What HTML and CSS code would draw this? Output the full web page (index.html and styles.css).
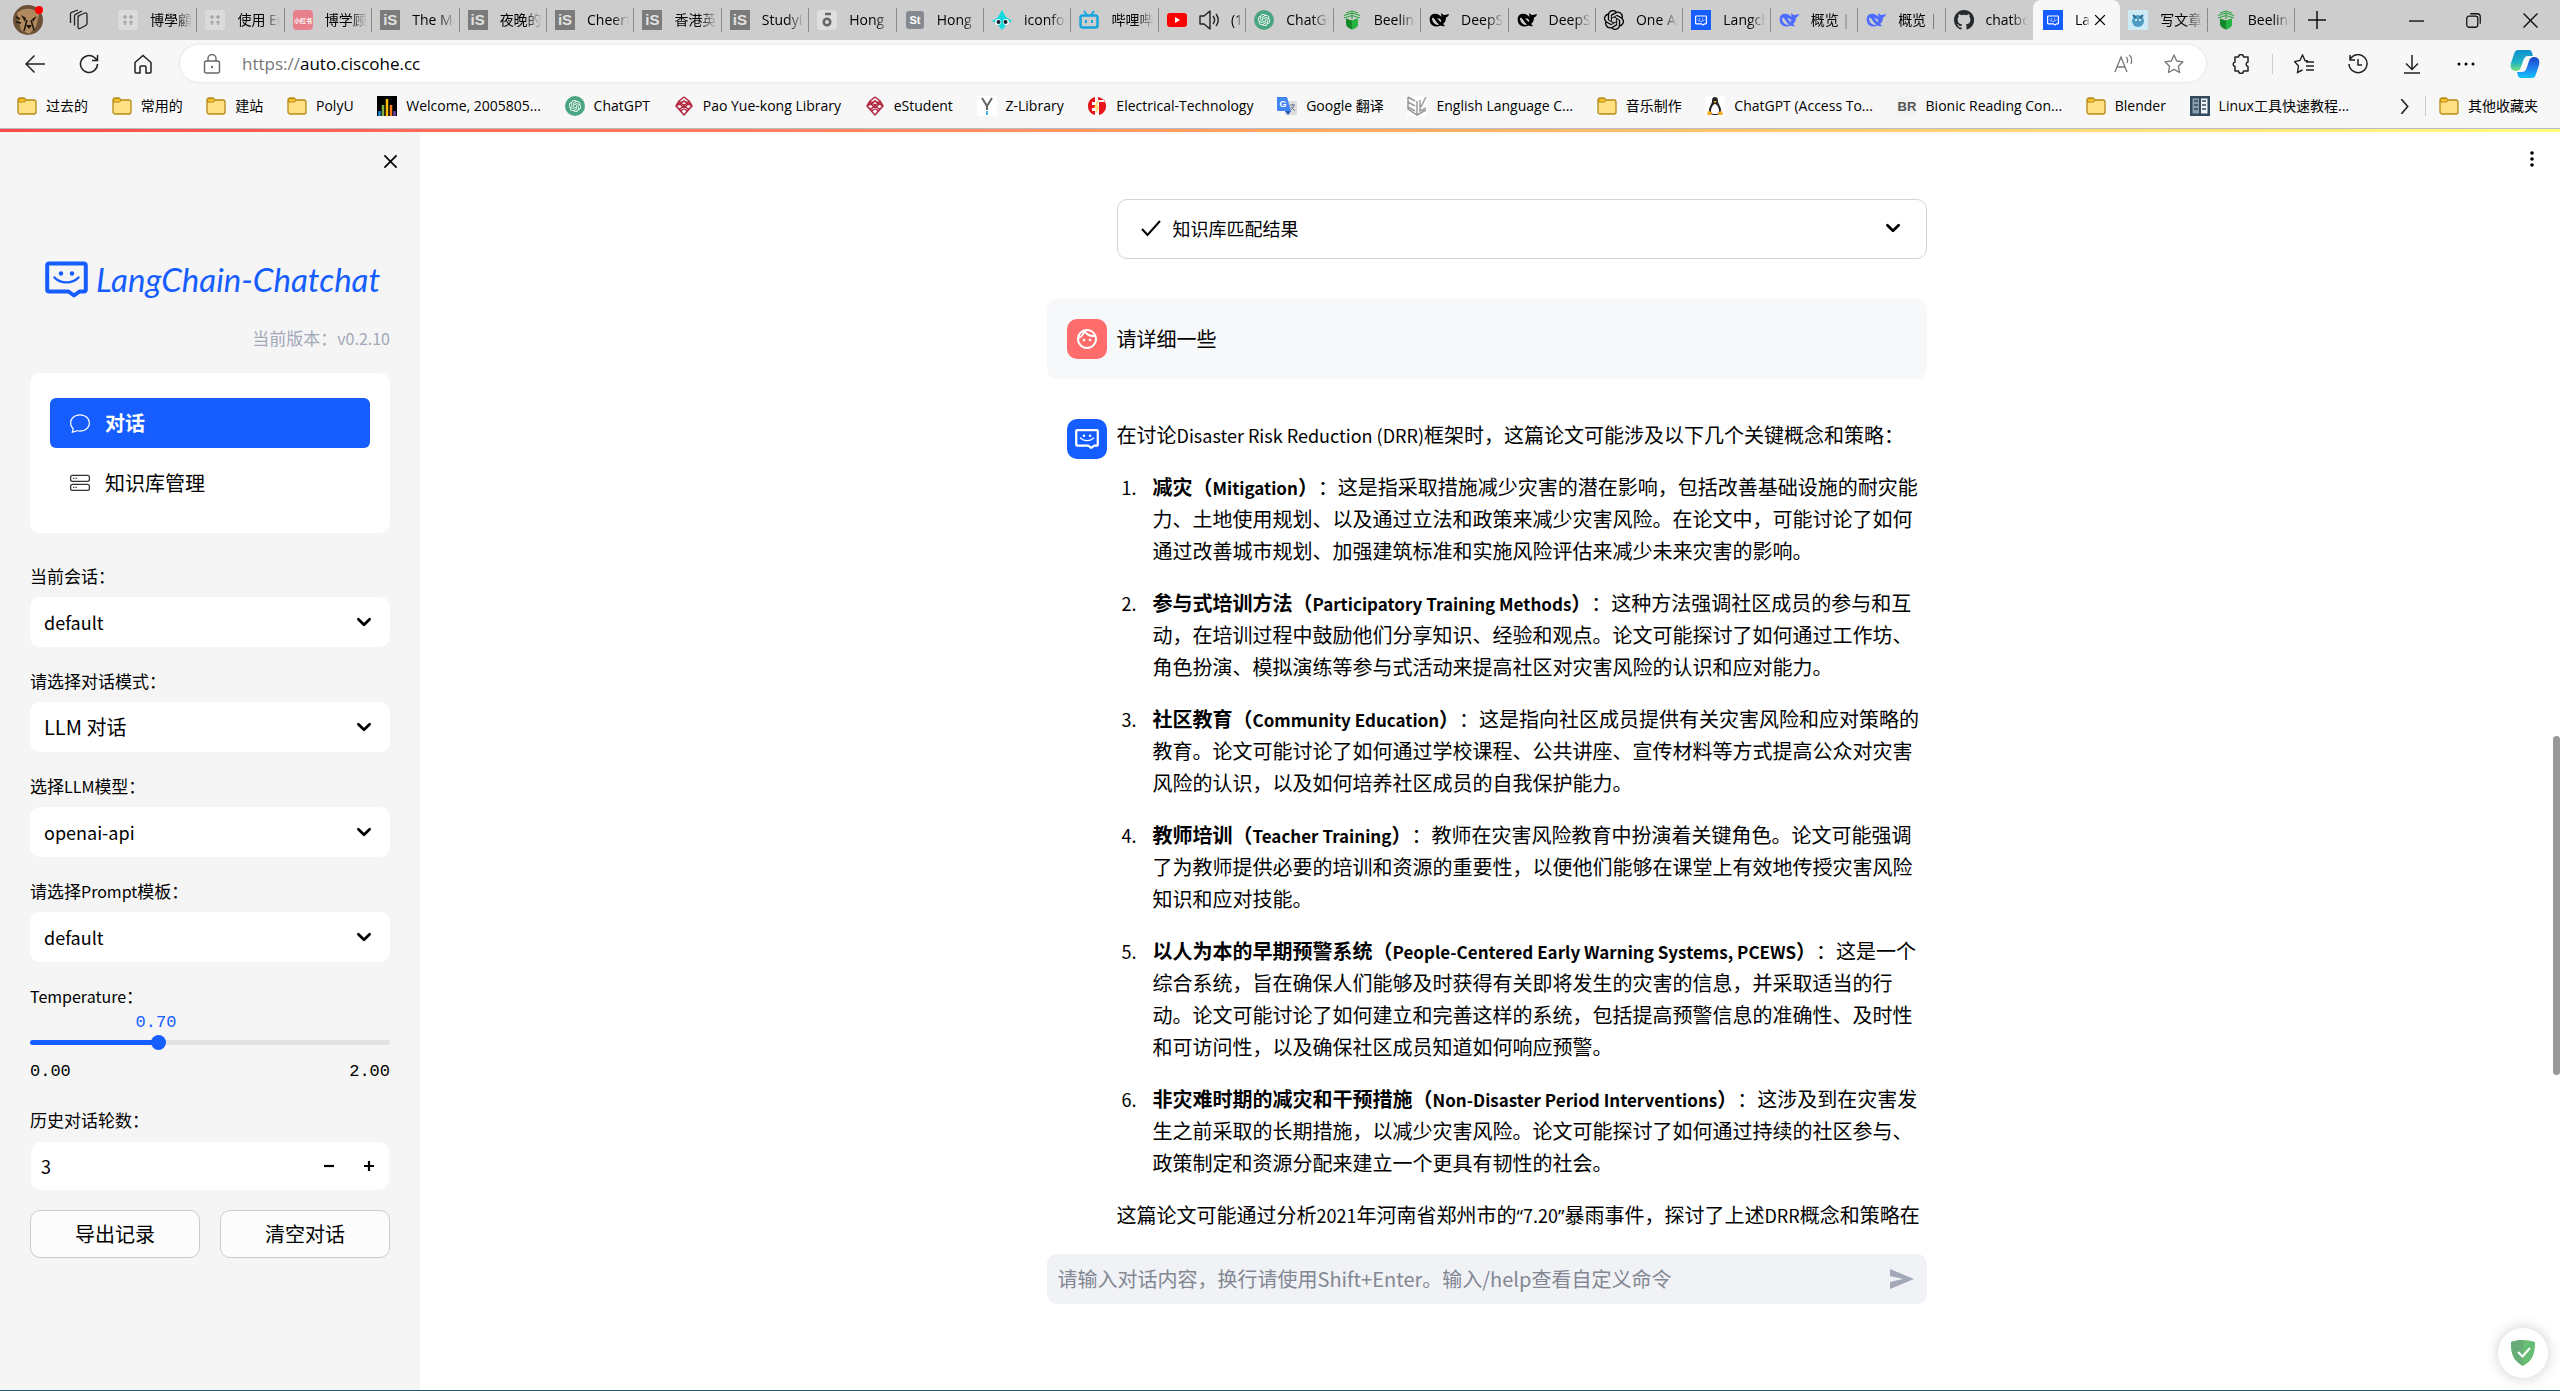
FILE: index.html
```html
<!DOCTYPE html>
<html lang="zh-CN">
<head>
    <meta charset="UTF-8">
    <title>Langchain-Chatchat WebUI</title>
    <link rel="stylesheet" href="styles.css">
</head>
<body>
    <svg class="sprite" aria-hidden="true">
        <symbol id="folder" viewBox="0 0 20 20">
            <path d="M1 4a2 2 0 0 1 2-2h4l2 2h8a2 2 0 0 1 2 2v10a2 2 0 0 1-2 2H3a2 2 0 0 1-2-2z" fill="#ffe082" stroke="#b58a17" stroke-width="1.3"/>
            <path d="M1.6 4a1.5 1.5 0 0 1 1.5-1.400h4A1.500 1.500 0 0 1 8.500 4.500 1.500 1.500 0 0 1 7 6H1.600z" fill="#fbc52c" stroke="#b58a17"/>
        </symbol>
        <symbol id="grid" viewBox="0 0 20 20">
            <rect width="20" height="20" rx="2" fill="#dadada"/>
            <path d="M5 7h4M11 7h4M5 12h4M11 12h4M7 5v4M13 5v4M7 11v4M13 11v4" stroke="#999" stroke-width="1.2"/>
        </symbol>
        <symbol id="knot" viewBox="0 0 16 16">
            <path d="M14.949 6.547a3.940 3.940 0 0 0-.348-3.273 4.110 4.110 0 0 0-4.400-1.934A4.100 4.100 0 0 0 8.423.200 4.150 4.150 0 0 0 6.305.086a4.100 4.100 0 0 0-1.891.948 4.040 4.040 0 0 0-1.158 1.753 4.100 4.100 0 0 0-1.563.679A4 4 0 0 0 .554 4.720a3.990 3.990 0 0 0 .502 4.731 3.940 3.940 0 0 0 .346 3.274 4.110 4.110 0 0 0 4.402 1.933c.382.425.852.764 1.377.995.526.231 1.095.350 1.670.346 1.780.002 3.358-1.132 3.901-2.804a4.100 4.100 0 0 0 1.563-.680 4 4 0 0 0 1.140-1.253 3.990 3.990 0 0 0-.506-4.716m-6.097 8.406a3.050 3.050 0 0 1-1.945-.694l.096-.054 3.230-1.838a.530.530 0 0 0 .265-.455v-4.490l1.366.778q.020.011.025.035v3.722c-.003 1.653-1.361 2.992-3.037 2.996m-6.530-2.750a2.950 2.950 0 0 1-.360-2.010l.095.057L5.290 12.090a.530.530 0 0 0 .527 0l3.949-2.246v1.555a.050.050 0 0 1-.022.041L6.473 13.300c-1.454.826-3.311.335-4.150-1.098m-.850-6.940A3.020 3.020 0 0 1 3.070 3.949v3.785a.510.510 0 0 0 .262.451l3.930 2.237-1.366.779a.050.050 0 0 1-.048 0L2.585 9.342a2.980 2.980 0 0 1-1.113-4.094zm11.216 2.571L8.747 5.576l1.362-.776a.050.050 0 0 1 .048 0l3.265 1.860a3 3 0 0 1 1.173 1.207 2.960 2.960 0 0 1-.270 3.200 3.050 3.050 0 0 1-1.360.997V8.279a.520.520 0 0 0-.276-.445m1.360-2.015-.097-.057-3.226-1.855a.530.530 0 0 0-.530 0L6.249 6.153V4.598a.040.040 0 0 1 .019-.040L9.533 2.700a3.070 3.070 0 0 1 3.257.139c.474.325.843.778 1.066 1.303.223.526.289 1.103.191 1.664zM5.503 8.575 4.139 7.800a.050.050 0 0 1-.026-.037V4.049c0-.570.166-1.127.476-1.607s.752-.864 1.275-1.105a3.080 3.080 0 0 1 3.234.410l-.096.054-3.230 1.838a.530.530 0 0 0-.265.455zm.742-1.577 1.758-1 1.762 1v2l-1.755 1-1.762-1z"/>
        </symbol>
        <symbol id="gpt" viewBox="0 0 20 20">
            <circle cx="10" cy="10" r="10" fill="#4aa583"/>
            <use href="#knot" x="4" y="4" width="12" height="12" fill="#fff"/>
        </symbol>
        <symbol id="beelink" viewBox="0 0 20 20">
            <path d="M4 8.500l6 2 6-2V14c0 2.500-2.500 4.500-6 5.500-3.500-1-6-3-6-5.500z" fill="#16882c"/>
            <path d="M10 10.500l6-2V14c0 2.500-2.500 4.500-6 5.500z" fill="#27b443"/>
            <path d="M2 5.500l8-2.500 8 2.500M4 3l6-2 6 2M2 8l8-2.500L18 8M10 2v7" fill="none" stroke="#2da544" stroke-width="1.100"/>
        </symbol>
        <symbol id="whale" viewBox="0 0 20 20">
            <path d="M1 7c1-3 4-4 7-3 2 .5 3 1.500 5 3-1-2-1-3-.5-4 1 1.500 2 2 3.500 2 1.500 0 2.500-1 4-1-.3 2-1.500 3-3 3.500 0 3-1 5-3 6.500l2 2c-2 .5-3 .3-4.500-.5C7 18 2 16 1 12 .5 10 .5 8.500 1 7zM3 8c0 4 3 7 6 7 1 0 1-.5.500-1-2-1.500-2.500-3-4-5C4.500 8 3.500 7.500 3 8zM8 9c1 0 3 2 3 3 1 0 1.500-1 1-2-.5-1.200-2.500-2-4-1z"/>
        </symbol>
        <symbol id="chat-logo" viewBox="0 0 43 37">
            <path d="M4 2.500h35a1.800 1.800 0 0 1 1.800 1.800v24.400a1.800 1.800 0 0 1-1.800 1.800h-4.500L29 34.500l-5.500-4H4a1.800 1.800 0 0 1-1.800-1.800V4.300A1.800 1.800 0 0 1 4 2.500z" fill="none" stroke="currentColor" stroke-width="4" stroke-linejoin="round"/>
            <circle cx="16" cy="12.500" r="2.200" fill="currentColor"/>
            <circle cx="27" cy="12.500" r="2.200" fill="currentColor"/>
            <path d="M9.500 16.500c6 6.500 18 6.500 24 0" fill="none" stroke="currentColor" stroke-width="2.400" stroke-linecap="round"/>
        </symbol>
        <symbol id="lang" viewBox="0 0 20 20">
            <rect width="20" height="20" fill="#165dff"/>
            <use href="#chat-logo" x="4" y="5" width="12" height="11" color="#fff"/>
        </symbol>
        <symbol id="poly" viewBox="0 0 20 20">
            <path d="M10 1l5 4-10 9M10 1L5 5l10 9M5 5l-3 5 8 9 8-9-3-5M2 10l8-5 8 5M2 10l5 5 8-8M18 10l-5 5-8-8" fill="none" stroke="#b22741" stroke-width="1.500" stroke-linejoin="round"/>
        </symbol>
        <symbol id="chevron" viewBox="0 0 16 16">
            <path d="M3 5.500l5 5 5-5" fill="none" stroke="#000" stroke-width="2.400" stroke-linecap="round" stroke-linejoin="round"/>
        </symbol>
        <symbol id="cross" viewBox="0 0 16 16">
            <path d="M1.500 1.500l13 13M14.500 1.500l-13 13" fill="none" stroke="#000" stroke-width="1.800"/>
        </symbol>
    </svg>

    <header class="browser">
        <div class="tab-strip">
            <div class="strip-start">
                <svg class="profile" viewBox="0 0 30 30">
                    <circle cx="15" cy="15" r="15" fill="#6b5138"/>
                    <path d="M4 8c6-6 18-6 22 2l-3 12-7 7-8-4z" fill="#b08a5e"/>
                    <path d="M8 10l5 3-1 4zM24 11l-5 3 1 3zM13 20h6l-3 4z" fill="#1e150e"/>
                    <path d="M14 15l-3 11M18 15l3 10M3 12l4 2M3 17l5 1" stroke="#1e150e" stroke-width="1.500"/>
                    <circle cx="26" cy="5" r="4" fill="#f00"/>
                </svg>
                <svg class="icon-lg" viewBox="0 0 22 22"><path d="M11 7l7-3a1.500 1.500 0 0 1 2 1.500v9a2 2 0 0 1-1 1.700l-6 3.300a1.500 1.500 0 0 1-2-1.300V9a2 2 0 0 1 1-2zM7.500 16.500V7a2 2 0 0 1 1-1.700L15 2M3.500 14V5a2 2 0 0 1 1-1.700L11 1" fill="none" stroke="#222" stroke-width="1.300" stroke-linejoin="round"/></svg>
            </div>
            <nav class="tabs">
                <a class="tab" href="#"><svg class="fav"><use href="#grid"/></svg><span class="tab-text">博學顧問</span></a>
                <a class="tab" href="#"><svg class="fav"><use href="#grid"/></svg><span class="tab-text">使用 Edge</span></a>
                <a class="tab" href="#"><svg class="fav" viewBox="0 0 20 20"><rect width="20" height="20" rx="4" fill="#e8808c"/><text x="10" y="13" text-anchor="middle" font-size="6" class="glyph" fill="#fff">小红书</text></svg><span class="tab-text">博学顾问</span></a>
                <a class="tab" href="#"><span class="fav is">iS</span><span class="tab-text">The Most</span></a>
                <a class="tab" href="#"><span class="fav is">iS</span><span class="tab-text">夜晚的香</span></a>
                <a class="tab" href="#"><span class="fav is">iS</span><span class="tab-text">Cheerful</span></a>
                <a class="tab" href="#"><span class="fav is">iS</span><span class="tab-text">香港英文</span></a>
                <a class="tab" href="#"><span class="fav is">iS</span><span class="tab-text">Studying</span></a>
                <a class="tab" href="#"><svg class="fav" viewBox="0 0 20 20"><rect width="20" height="20" rx="4" fill="#dedede"/><circle cx="10" cy="12" r="3.200" fill="none" stroke="#666" stroke-width="2.600"/><path d="M8 4h6" stroke="#666" stroke-width="2.500"/></svg><span class="tab-text">Hong</span></a>
                <a class="tab" href="#"><svg class="fav" viewBox="0 0 20 20"><rect x="1" y="1" width="18" height="18" rx="3" fill="#858a91"/><text x="10" y="14" text-anchor="middle" font-size="11" class="glyph" fill="#fff">St</text></svg><span class="tab-text">Hong</span></a>
                <a class="tab" href="#"><svg class="fav" viewBox="0 0 20 20"><path d="M10 0l4 7 6 4-5 3-5 6-5-6-5-3 6-4z" fill="#13d8dd"/><circle cx="6" cy="12" r="3" fill="#fff"/><circle cx="14" cy="12" r="3" fill="#fff"/><circle cx="6.500" cy="12" r="2" fill="#123"/><circle cx="13.500" cy="12" r="2" fill="#123"/></svg><span class="tab-text">iconfont</span></a>
                <a class="tab" href="#"><svg class="fav" viewBox="0 0 20 20"><path d="M5 1l3 4M15 1l-3 4M7 10v3M13 10v3" stroke="#11a5dd" stroke-width="2"/><rect x="1.500" y="5.500" width="17" height="12" rx="2" fill="none" stroke="#11a5dd" stroke-width="2.400"/></svg><span class="tab-text">哔哩哔哩</span></a>
                <a class="tab" href="#"><svg class="fav" viewBox="0 0 20 20"><rect y="3" width="20" height="14" rx="3" fill="#f00"/><path d="M8 7l5 3-5 3z" fill="#fff"/></svg><svg class="fav" viewBox="0 0 20 20"><path d="M1 6h4l6-5v18l-6-5H1zM14 6c2 2.500 2 5.500 0 8M17 4c3 4 3 8 0 12" fill="none" stroke="#222" stroke-width="1.400" stroke-linejoin="round"/></svg><span class="tab-text">(1) You</span></a>
                <a class="tab" href="#"><svg class="fav"><use href="#gpt"/></svg><span class="tab-text">ChatGPT</span></a>
                <a class="tab" href="#"><svg class="fav"><use href="#beelink"/></svg><span class="tab-text">Beelink</span></a>
                <a class="tab" href="#"><svg class="fav"><use href="#whale"/></svg><span class="tab-text">DeepSeek</span></a>
                <a class="tab" href="#"><svg class="fav"><use href="#whale"/></svg><span class="tab-text">DeepSeek</span></a>
                <a class="tab" href="#"><svg class="fav"><use href="#knot"/></svg><span class="tab-text">One API</span></a>
                <a class="tab" href="#"><svg class="fav"><use href="#lang"/></svg><span class="tab-text">Langchain</span></a>
                <a class="tab" href="#"><svg class="fav blue"><use href="#whale"/></svg><span class="tab-text">概览 | D</span></a>
                <a class="tab" href="#"><svg class="fav blue"><use href="#whale"/></svg><span class="tab-text">概览 | D</span></a>
                <a class="tab plain" href="#"><svg class="fav" viewBox="0 0 16 16"><path fill="#24292e" d="M8 0C3.580 0 0 3.580 0 8c0 3.540 2.290 6.530 5.470 7.590.400.070.550-.170.550-.380v-1.340c-2.230.480-2.700-1.070-2.700-1.070-.360-.920-.890-1.170-.890-1.170-.730-.500.050-.490.050-.490.800.060 1.230.830 1.230.830.710 1.220 1.870.870 2.330.660.070-.520.280-.870.510-1.070-1.780-.200-3.640-.890-3.640-3.950 0-.870.310-1.590.820-2.150-.080-.200-.360-1.020.080-2.120 0 0 .670-.210 2.200.820a7.500 7.500 0 0 1 4 0c1.530-1.040 2.200-.820 2.200-.820.440 1.100.160 1.920.080 2.120.510.560.820 1.270.820 2.150 0 3.070-1.870 3.750-3.650 3.950.290.250.540.730.540 1.480v2.200c0 .210.150.460.550.380A8 8 0 0 0 8 0z"/></svg><span class="tab-text">chatbot</span></a>
                <a class="tab active" href="#"><svg class="fav"><use href="#lang"/></svg><span class="tab-text">Langchain</span><svg class="tab-close"><use href="#cross"/></svg></a>
                <a class="tab" href="#"><svg class="fav" viewBox="0 0 20 20"><rect width="20" height="20" fill="#cdeaf5"/><circle cx="10" cy="11" r="6" fill="#4f9dc4"/><path d="M5 5l3 3M15 5l-3 3" stroke="#2b6c93" stroke-width="2"/><circle cx="8" cy="10" r="1" fill="#fff"/><circle cx="12" cy="10" r="1" fill="#fff"/></svg><span class="tab-text">写文章 -</span></a>
                <a class="tab" href="#"><svg class="fav"><use href="#beelink"/></svg><span class="tab-text">Beelink</span></a>
            </nav>
            <div class="strip-end">
                <button class="icon-btn" aria-label="新建标签页"><svg class="icon" viewBox="0 0 20 20"><path d="M10 1v18M1 10h18" stroke="#111" stroke-width="1.500"/></svg></button>
                <div class="window-buttons">
                    <button class="icon-btn" aria-label="最小化"><svg class="icon-sm" viewBox="0 0 14 14"><path d="M0 7.500h14" stroke="#111" stroke-width="1.300"/></svg></button>
                    <button class="icon-btn" aria-label="还原"><svg class="icon-sm" viewBox="0 0 14 14"><path d="M.7 5a2 2 0 0 1 2-2H9a2 2 0 0 1 2 2v6.300a2 2 0 0 1-2 2H2.700a2 2 0 0 1-2-2zM4 .7h6.500a2.800 2.800 0 0 1 2.800 2.800V10" fill="none" stroke="#111" stroke-width="1.200"/></svg></button>
                    <button class="icon-btn" aria-label="关闭"><svg class="icon-sm" viewBox="0 0 14 14"><path d="M.5.5l13 13M13.500.5l-13 13" stroke="#111" stroke-width="1.300"/></svg></button>
                </div>
            </div>
        </div>

        <div class="toolbar">
            <div class="tool-group">
                <button class="icon-btn" aria-label="后退"><svg class="icon" viewBox="0 0 20 20"><path d="M20 10H1M9.500 1.500L1 10l8.500 8.500" fill="none" stroke="#222" stroke-width="1.500"/></svg></button>
                <button class="icon-btn" aria-label="刷新"><svg class="icon" viewBox="0 0 20 20"><path d="M18.500 10a8.500 8.500 0 1 1-3-6.500L18 6M18.500 1v5.500H13" fill="none" stroke="#222" stroke-width="1.500"/></svg></button>
                <button class="icon-btn" aria-label="主页"><svg class="icon" viewBox="0 0 20 20"><path d="M2 8.500l8-7 8 7V18a1 1 0 0 1-1 1h-4v-6a1 1 0 0 0-1-1H8a1 1 0 0 0-1 1v6H3a1 1 0 0 1-1-1z" fill="none" stroke="#222" stroke-width="1.500"/></svg></button>
            </div>
            <div class="address">
                <svg class="icon" viewBox="0 0 20 20"><rect x="2.500" y="7" width="15" height="12" rx="2" fill="none" stroke="#666" stroke-width="1.400"/><path d="M6 7V4.500a4 4 0 0 1 8 0V7" fill="none" stroke="#666" stroke-width="1.400"/><circle cx="10" cy="13" r="1.200" fill="#666"/></svg>
                <label class="scheme" for="url">https://</label>
                <input class="url" id="url" type="text" value="auto.ciscohe.cc">
                <button class="icon-btn" aria-label="大声朗读"><svg class="icon" viewBox="0 0 20 20"><path d="M1 18L7 3l6 15M3 13h8M12 3c2 1 2 4 1 6M15 1c3 2 3 6 2 9" fill="none" stroke="#777" stroke-width="1.300"/></svg></button>
                <button class="icon-btn" aria-label="收藏"><svg class="icon" viewBox="0 0 20 20"><path d="M10 1l2.700 6 6.300.8-4.600 4.400 1.200 6.300-5.600-3.100-5.600 3.100 1.200-6.300L1 7.800 7.300 7z" fill="none" stroke="#777" stroke-width="1.300" stroke-linejoin="round"/></svg></button>
            </div>
            <div class="tool-group tool-end">
                <button class="icon-btn" aria-label="扩展"><svg class="icon" viewBox="0 0 20 20"><path d="M4 3h3.500a2.500 2.500 0 0 1 5 0H17v5a2.300 2.300 0 0 0 0 4.500V17h-4.500a2.500 2.500 0 0 1-5 0H4v-4.500A2.300 2.300 0 0 1 4 8z" fill="none" stroke="#222" stroke-width="1.500" stroke-linejoin="round"/></svg></button>
                <span class="divider"></span>
                <button class="icon-btn" aria-label="收藏夹"><svg class="icon" viewBox="0 0 20 20"><path d="M14 7l-3-.5L8.500 1 6 6.500.5 7.500 4.500 12l-1 6.500L8.500 16M12 8h8M12 12h8M12 16h8" fill="none" stroke="#222" stroke-width="1.400"/></svg></button>
                <button class="icon-btn" aria-label="历史记录"><svg class="icon" viewBox="0 0 20 20"><path d="M2 5.500A9 9 0 1 1 1 10M2 1v5h5M10 5v6h4" fill="none" stroke="#222" stroke-width="1.500"/></svg></button>
                <button class="icon-btn" aria-label="下载"><svg class="icon" viewBox="0 0 20 20"><path d="M10 1v14M4 9.500l6 6 6-6M2 19h16" fill="none" stroke="#222" stroke-width="1.500"/></svg></button>
                <button class="icon-btn" aria-label="更多"><svg class="icon" viewBox="0 0 20 20"><circle cx="3" cy="10" r="1.500"/><circle cx="10" cy="10" r="1.500"/><circle cx="17" cy="10" r="1.500"/></svg></button>
                <button class="icon-btn" aria-label="Copilot"><svg class="copilot" viewBox="0 0 30 30">
                    <defs>
                        <linearGradient id="cop1" x2="0" y2="1"><stop stop-color="#0d8fd0"/><stop offset=".6" stop-color="#21b5c4"/><stop offset="1" stop-color="#7be07a"/></linearGradient>
                        <linearGradient id="cop2" x2="0" y2="1"><stop stop-color="#1b45c9"/><stop offset=".5" stop-color="#1e7bea"/><stop offset="1" stop-color="#14c4fb"/></linearGradient>
                    </defs>
                    <path d="M8 1h11c3 0 3 3 4 6h-5c-3 0-4 2-5 5l-2 6c-1 3-3 4-5 4-5 0-6-4-5-8L4 5c1-3 2-4 4-4z" fill="url(#cop1)"/>
                    <path d="M22 29H11c-3 0-3-3-4-6h5c3 0 4-2 5-5l2-6c1-3 3-4 5-4 5 0 6 4 5 8l-3 9c-1 3-2 4-4 4z" fill="url(#cop2)"/>
                </svg></button>
            </div>
        </div>

        <div class="bookmarks">
            <nav class="bookmark-list">
                <a class="bookmark" href="#"><svg class="fav"><use href="#folder"/></svg>过去的</a>
                <a class="bookmark" href="#"><svg class="fav"><use href="#folder"/></svg>常用的</a>
                <a class="bookmark" href="#"><svg class="fav"><use href="#folder"/></svg>建站</a>
                <a class="bookmark" href="#"><svg class="fav"><use href="#folder"/></svg>PolyU</a>
                <a class="bookmark" href="#"><svg class="fav" viewBox="0 0 20 20"><rect width="20" height="20"/><path d="M2.500 20v-5" stroke="#1e88e5" stroke-width="2.500"/><path d="M6 20V9" stroke="#7cb342" stroke-width="2.500"/><path d="M10 20V3" stroke="#ffc107" stroke-width="2.500"/><path d="M14 20V9" stroke="#ff7a1a" stroke-width="2.500"/><path d="M17.500 20v-5" stroke="#6a3fb0" stroke-width="2.500"/></svg>Welcome, 2005805...</a>
                <a class="bookmark" href="#"><svg class="fav"><use href="#gpt"/></svg>ChatGPT</a>
                <a class="bookmark" href="#"><svg class="fav"><use href="#poly"/></svg>Pao Yue-kong Library</a>
                <a class="bookmark" href="#"><svg class="fav"><use href="#poly"/></svg>eStudent</a>
                <a class="bookmark" href="#"><svg class="fav" viewBox="0 0 20 20"><rect width="20" height="20" fill="#fff"/><path d="M5 2l5 8 5-8M10 10v4" fill="none" stroke="#666" stroke-width="2"/><path d="M10 15v4" stroke="#4ab0e0" stroke-width="2"/></svg>Z-Library</a>
                <a class="bookmark" href="#"><svg class="fav" viewBox="0 0 20 20"><path d="M8 1C4 2 1 5 1 10s3 8 7 9v-4H5v-3h3V9H5V6h3zM11 1c5 1 8 4 8 9s-3 8-7 9V6h6V4h-7z" fill="#e8141c"/><path d="M11 5L8 11h3l-2 5" fill="none" stroke="#ffd54f" stroke-width="1.500"/></svg>Electrical-Technology</a>
                <a class="bookmark" href="#"><svg class="fav" viewBox="0 0 20 20"><rect x="8" y="5" width="12" height="14" rx="1" fill="#dcdcdc"/><path d="M0 1h10l4 14H1a1 1 0 0 1-1-1z" fill="#4285f4"/><path d="M8 15h6l-3 4z" fill="#2b56b8"/><text x="6" y="11" text-anchor="middle" font-size="9" class="glyph" fill="#fff">G</text><path d="M13 9h5M15.500 8v1M17 9c-1 3-2 4-3 5M14 11l4 4" stroke="#68798f" fill="none"/></svg>Google 翻译</a>
                <a class="bookmark" href="#"><svg class="fav" viewBox="0 0 20 20"><rect width="20" height="20" fill="#fff"/><path d="M1 1l7 4M1 6l7 4M1 11l7 4M1 1v12l9 6V5M13 4v11l6-3M10 19l9-5M14 11l5-10" fill="none" stroke="#999" stroke-width="1.500"/></svg>English Language C...</a>
                <a class="bookmark" href="#"><svg class="fav"><use href="#folder"/></svg>音乐制作</a>
                <a class="bookmark" href="#"><svg class="fav" viewBox="0 0 20 20"><rect width="20" height="20" fill="#fff"/><path d="M10 1c3 0 3 3 3 5 1 3 3 5 3 8s-2 5-6 5-6-2-6-5 2-5 3-8c0-2 0-5 3-5z" fill="#222"/><path d="M10 8c2 0 4 4 4 7s-2 3-4 3-4 0-4-3 2-7 4-7z" fill="#fff"/><path d="M3 15l4 1-1 3H2zM17 15l-4 1 1 3h4zM8.500 5h3L10 7.500z" fill="#f5b01c"/></svg>ChatGPT (Access To...</a>
                <a class="bookmark" href="#"><svg class="fav" viewBox="0 0 20 20"><rect width="20" height="20" fill="#f2f2f2"/><text x="10" y="15" text-anchor="middle" font-size="13" class="glyph" fill="#555">BR</text></svg>Bionic Reading Con...</a>
                <a class="bookmark" href="#"><svg class="fav"><use href="#folder"/></svg>Blender</a>
                <a class="bookmark" href="#"><svg class="fav" viewBox="0 0 20 20"><rect width="20" height="20" fill="#34495e"/><path d="M2.500 2.500h6.500v15H2.500z" fill="#8ba0ad"/><path d="M11 2.500h6.500v15H11z" fill="#eef2f4"/><path d="M4 5h4M4 9h4M4 13h4M12 5h4M12 9h4M12 13h4" stroke="#34495e" stroke-width="1.500"/></svg>Linux工具快速教程...</a>
            </nav>
            <div class="bookmark-end">
                <button class="icon-btn" aria-label="更多书签"><svg class="icon-sm" viewBox="0 0 14 14"><path d="M4 0l6 7-6 7" fill="none" stroke="#222" stroke-width="1.500"/></svg></button>
                <span class="divider"></span>
                <a class="bookmark" href="#"><svg class="fav"><use href="#folder"/></svg>其他收藏夹</a>
            </div>
        </div>
    </header>

    <div class="decoration"></div>

    <div class="app">
        <aside class="sidebar">
            <div class="sidebar-head">
                <button class="icon-btn" aria-label="收起侧栏"><svg class="icon-sm" viewBox="0 0 16 16"><use href="#cross"/></svg></button>
            </div>
            <div class="brand">
                <svg class="brand-icon"><use href="#chat-logo"/></svg>
                <span class="brand-name">LangChain-Chatchat</span>
            </div>
            <p class="version">当前版本：<span class="en">v0.2.10</span></p>

            <nav class="menu">
                <a class="menu-item selected" href="#">
                    <svg class="icon" viewBox="0 0 16 16"><path fill="currentColor" d="M2.678 11.894a1 1 0 0 1 .287.801 10.970 10.970 0 0 1-.398 2c1.395-.323 2.247-.697 2.634-.893a1 1 0 0 1 .710-.074A8.060 8.060 0 0 0 8 14c3.996 0 7-2.807 7-6s-3.004-6-7-6-7 2.808-7 6c0 1.468.617 2.830 1.678 3.894m-.493 3.905a22 22 0 0 1-.713.129c-.200.032-.352-.176-.273-.362a10 10 0 0 0 .244-.637l.003-.010c.248-.720.450-1.548.524-2.319C.743 11.370 0 9.760 0 8c0-3.866 3.582-7 8-7s8 3.134 8 7-3.582 7-8 7a9 9 0 0 1-2.347-.306c-.520.263-1.639.742-3.468 1.105"/></svg>
                    对话
                </a>
                <a class="menu-item" href="#">
                    <svg class="icon" viewBox="0 0 16 16"><g fill="none" stroke="#333" stroke-width="1"><rect x=".5" y="1.800" width="15" height="4.800" rx="1.500"/><rect x=".5" y="9" width="15" height="4.800" rx="1.500"/></g><path d="M2.500 4.200h1M4.500 4.200h1M2.500 11.400h1M4.500 11.400h1" stroke="#333"/></svg>
                    知识库管理
                </a>
            </nav>

            <form class="settings">
                <div class="field">
                    <label for="session">当前会话：</label>
                    <div class="select-wrap">
                        <select id="session" class="latin"><option>default</option></select>
                        <svg class="caret"><use href="#chevron"/></svg>
                    </div>
                </div>
                <div class="field">
                    <label for="mode">请选择对话模式：</label>
                    <div class="select-wrap">
                        <select id="mode"><option>LLM 对话</option></select>
                        <svg class="caret"><use href="#chevron"/></svg>
                    </div>
                </div>
                <div class="field">
                    <label for="model">选择<span class="en">LLM</span>模型：</label>
                    <div class="select-wrap">
                        <select id="model" class="latin"><option>openai-api</option></select>
                        <svg class="caret"><use href="#chevron"/></svg>
                    </div>
                </div>
                <div class="field">
                    <label for="prompt">请选择<span class="en">Prompt</span>模板：</label>
                    <div class="select-wrap">
                        <select id="prompt" class="latin"><option>default</option></select>
                        <svg class="caret"><use href="#chevron"/></svg>
                    </div>
                </div>
                <div class="field slider">
                    <label for="temperature"><span class="en">Temperature</span>：</label>
                    <div class="slider-value"><output for="temperature" style="margin-left: 35%">0.70</output></div>
                    <input id="temperature" type="range" min="0" max="2" step="0.01" value="0.7">
                    <div class="slider-ends"><span>0.00</span><span>2.00</span></div>
                </div>
                <div class="field">
                    <label for="rounds">历史对话轮数：</label>
                    <div class="stepper">
                        <input id="rounds" type="number" value="3">
                        <button type="button" aria-label="减少"><svg viewBox="0 0 10 10"><path d="M0 5h10" stroke="#000" stroke-width="2.200"/></svg></button>
                        <button type="button" aria-label="增加"><svg viewBox="0 0 10 10"><path d="M0 5h10M5 0v10" stroke="#000" stroke-width="2.200"/></svg></button>
                    </div>
                </div>
                <div class="actions">
                    <button type="button" class="action">导出记录</button>
                    <button type="button" class="action">清空对话</button>
                </div>
            </form>
        </aside>

        <main class="main">
            <div class="chat">
                <details class="expander">
                    <summary>
                        <svg class="icon" viewBox="0 0 20 20"><path d="M1 11l5.500 6L19 3" fill="none" stroke="#000" stroke-width="2"/></svg>
                        <span>知识库匹配结果</span>
                        <svg class="caret"><use href="#chevron"/></svg>
                    </summary>
                </details>

                <section class="message user">
                    <span class="avatar red">
                        <svg class="face" viewBox="0 0 24 24"><path fill="#fff" d="M10.250 13a1.250 1.250 0 1 1-2.500 0 1.250 1.250 0 0 1 2.500 0zM15 11.750a1.250 1.250 0 1 0 0 2.500 1.250 1.250 0 0 0 0-2.500zM22 12c0 5.520-4.480 10-10 10S2 17.520 2 12 6.480 2 12 2s10 4.480 10 10zM10.660 4.120A10 10 0 0 0 17.500 8c.460 0 .910-.050 1.340-.120A8 8 0 0 0 12 4c-.460 0-.910.050-1.340.120zM4.420 9.470a8 8 0 0 0 3.660-4.440 8.040 8.040 0 0 0-3.660 4.440zM20 12c0-.780-.120-1.530-.330-2.240-.700.150-1.420.240-2.170.240a10 10 0 0 1-7.760-3.690A12 12 0 0 1 4 11.860V12a8 8 0 1 0 16 0z"/></svg>
                    </span>
                    <div class="content"><p>请详细一些</p></div>
                </section>

                <section class="message">
                    <span class="avatar blue">
                        <svg class="face"><use href="#chat-logo"/></svg>
                    </span>
                    <div class="content">
                        <p>在讨论<span class="en">Disaster Risk Reduction (DRR)</span>框架时，这篇论文可能涉及以下几个关键概念和策略：</p>
                        <ol>
                            <li><strong>减灾（<span class="en">Mitigation</span>）</strong>：这是指采取措施减少灾害的潜在影响，包括改善基础设施的耐灾能力、土地使用规划、以及通过立法和政策来减少灾害风险。在论文中，可能讨论了如何通过改善城市规划、加强建筑标准和实施风险评估来减少未来灾害的影响。</li>
                            <li><strong>参与式培训方法（<span class="en">Participatory Training Methods</span>）</strong>：这种方法强调社区成员的参与和互动，在培训过程中鼓励他们分享知识、经验和观点。论文可能探讨了如何通过工作坊、角色扮演、模拟演练等参与式活动来提高社区对灾害风险的认识和应对能力。</li>
                            <li><strong>社区教育（<span class="en">Community Education</span>）</strong>：这是指向社区成员提供有关灾害风险和应对策略的教育。论文可能讨论了如何通过学校课程、公共讲座、宣传材料等方式提高公众对灾害风险的认识，以及如何培养社区成员的自我保护能力。</li>
                            <li><strong>教师培训（<span class="en">Teacher Training</span>）</strong>：教师在灾害风险教育中扮演着关键角色。论文可能强调了为教师提供必要的培训和资源的重要性，以便他们能够在课堂上有效地传授灾害风险知识和应对技能。</li>
                            <li><strong>以人为本的早期预警系统（<span class="en">People-Centered Early Warning Systems, PCEWS</span>）</strong>：这是一个综合系统，旨在确保人们能够及时获得有关即将发生的灾害的信息，并采取适当的行动。论文可能讨论了如何建立和完善这样的系统，包括提高预警信息的准确性、及时性和可访问性，以及确保社区成员知道如何响应预警。</li>
                            <li><strong>非灾难时期的减灾和干预措施（<span class="en">Non-Disaster Period Interventions</span>）</strong>：这涉及到在灾害发生之前采取的长期措施，以减少灾害风险。论文可能探讨了如何通过持续的社区参与、政策制定和资源分配来建立一个更具有韧性的社会。</li>
                        </ol>
                        <p>这篇论文可能通过分析<span class="en">2021</span>年河南省郑州市的<span class="en"><q>7.20</q></span>暴雨事件，探讨了上述<span class="en">DRR</span>概念和策略在</p>
                    </div>
                </section>

                <form class="composer">
                    <input type="text" aria-label="对话内容" placeholder="请输入对话内容，换行请使用Shift+Enter。输入/help查看自定义命令">
                    <button type="button" class="icon-btn" aria-label="发送"><svg class="send" viewBox="0 0 24 20"><path d="M0 0l24 10L0 20v-7l13-3L0 7z" fill="#a3a8b8"/></svg></button>
                </form>
            </div>
            <button class="icon-btn more" aria-label="菜单"><svg class="icon" viewBox="0 0 20 20"><circle cx="10" cy="4" r="1.800"/><circle cx="10" cy="10" r="1.800"/><circle cx="10" cy="16" r="1.800"/></svg></button>
            <span class="scroll-thumb"></span>
            <span class="guard">
                <svg viewBox="0 0 26 28"><path d="M13 1c4 0 8 .7 12 2 0 12-2 18-12 24C3 21 1 15 1 3c4-1.300 8-2 12-2z" fill="#67bd73"/><path d="M13 1v26C3 21 1 15 1 3c4-1.300 8-2 12-2z" fill="#68ad77"/><path d="M8 13l4.500 4.500L20 9" fill="none" stroke="#fff" stroke-width="2"/></svg>
            </span>
        </main>
    </div>
</body>
</html>
```

FILE: styles.css
```css
* {
    box-sizing: border-box;
}

body {
    display: flex;
    flex-direction: column;
    min-height: 100vh;
    margin: 0;
    color: #000000;
    font-family: "Noto Sans CJK SC", sans-serif;
    font-size: 20px;
    line-height: 32px;
    text-spacing-trim: space-all;
    border-bottom: 1px solid #1f5a6b;
}

p {
    margin: 0;
}

a {
    color: inherit;
    text-decoration: none;
}

button, input, select {
    padding: 0;
    border: none;
    outline: none;
    background: none;
    color: inherit;
    font: inherit;
}

q {
    quotes: "“" "”";
}

q::before, q::after {
    font-family: "Noto Sans", sans-serif;
}

.sprite {
    display: none;
}

.glyph {
    font-family: "Liberation Sans", "Noto Sans CJK SC", sans-serif;
    font-weight: bold;
}

.icon-btn {
    display: flex;
    align-items: center;
    justify-content: center;
}

.icon {
    width: 20px;
    height: 20px;
}

.icon-lg {
    width: 22px;
    height: 22px;
}

.icon-sm {
    width: 15px;
    height: 15px;
}

.fav {
    flex: none;
    width: 20px;
    height: 20px;
}

.fav.blue {
    fill: #4d6bfe;
}

.fav.is {
    background-color: #7b7b7b;
    color: #e2e2e2;
    font-family: "Liberation Sans", sans-serif;
    font-size: 15px;
    font-weight: bold;
    text-align: center;
}

.divider {
    width: 1px;
    height: 20px;
    background-color: #cccccc;
}

/* browser chrome */
.browser {
    background-color: #f7f7f7;
    border-bottom: 1px solid #b9bcc0;
    font-family: "Open Sans", "Noto Sans CJK SC", sans-serif;
    font-size: 14px;
    line-height: 20px;
}

.tab-strip {
    display: flex;
    height: 40px;
    background-color: #cdcdcd;
}

.strip-start {
    display: flex;
    align-items: center;
    gap: 24px;
    width: 110px;
    padding-left: 13px;
}

.profile {
    width: 30px;
    height: 30px;
    overflow: visible;
}

.tabs {
    display: flex;
    flex: 1;
    min-width: 0;
}

.tab {
    display: flex;
    flex: 1 1 80px;
    align-items: center;
    gap: 12px;
    min-width: 0;
    margin: 8px 0;
    padding: 0 4px 0 8px;
    border-right: 1px solid #8a8a8a;
}

.tab.plain {
    border-right-color: transparent;
}

.tab.active {
    margin: 0;
    border: none;
    padding: 0 14px 0 10px;
    border-radius: 8px 8px 0 0;
    background-color: #f7f7f7;
}

.tab-text {
    flex: 1;
    min-width: 0;
    overflow: hidden;
    white-space: nowrap;
    mask-image: linear-gradient(90deg, #000 60%, transparent);
}

.tab-close {
    flex: none;
    width: 12px;
    height: 12px;
    margin-left: -8px;
}

.strip-end {
    display: flex;
    align-items: center;
    justify-content: space-between;
    width: 265px;
    padding: 0 22px 0 12px;
}

.window-buttons {
    display: flex;
    gap: 42px;
}

.toolbar {
    display: flex;
    align-items: center;
    height: 47px;
}

.tool-group {
    display: flex;
    align-items: center;
    gap: 34px;
    width: 180px;
    padding: 0 25px;
}

.tool-end {
    width: 354px;
    padding-right: 0;
}

.tool-end .divider {
    margin: 0 -13px;
}

.copilot {
    width: 30px;
    height: 30px;
}

.address {
    display: flex;
    flex: 1;
    align-items: center;
    height: 37px;
    padding: 0 22px;
    border-radius: 19px;
    background-color: #ffffff;
    box-shadow: 0 0 3px rgba(0, 0, 0, 0.12);
    font-size: 17px;
}

.address .icon-btn {
    margin-left: 30px;
}

.scheme {
    margin-left: 20px;
    color: #767676;
}

.url {
    flex: 1;
}

.bookmarks {
    display: flex;
    align-items: center;
    justify-content: space-between;
    height: 41px;
    padding: 0 22px 3px 17px;
}

.bookmark-list {
    display: flex;
    flex: 1;
    justify-content: space-between;
}

.bookmark {
    display: flex;
    align-items: center;
    gap: 9px;
    white-space: nowrap;
}

.bookmark-end {
    display: flex;
    align-items: center;
    gap: 13px;
    margin-left: 48px;
}

.decoration {
    height: 3px;
    background-image: linear-gradient(90deg, #ff4b4b, #fffd80);
}

/* app */
.app {
    display: flex;
    flex: 1;
}

.sidebar {
    width: 420px;
    padding: 20px 30px;
    background-color: #f5f5f5;
}

.sidebar-head {
    display: flex;
    align-items: flex-start;
    justify-content: flex-end;
    height: 108px;
    margin-right: -8px;
    padding-top: 2px;
}

.brand {
    display: flex;
    align-items: center;
    gap: 8px;
    height: 38px;
    padding-left: 15px;
    color: #165dff;
}

.brand-icon {
    flex: none;
    width: 43px;
    height: 37px;
}

.brand-name {
    font-family: Lato, sans-serif;
    font-size: 33px;
    font-style: italic;
    white-space: nowrap;
}

.version {
    margin-top: 24px;
    color: #a3a8b8;
    font-size: 17px;
    text-align: right;
}

.menu {
    display: flex;
    flex-direction: column;
    gap: 10px;
    margin-top: 19px;
    padding: 25px 20px;
    border-radius: 10px;
    background-color: #ffffff;
}

.menu-item {
    display: flex;
    align-items: center;
    gap: 15px;
    height: 50px;
    padding: 0 20px;
    border-radius: 6px;
}

.menu-item.selected {
    background-color: #165dff;
    color: #ffffff;
    font-weight: bold;
}

.settings {
    display: flex;
    flex-direction: column;
    gap: 20px;
    margin-top: 29px;
}

.field label {
    display: block;
    height: 30px;
    font-size: 17px;
    line-height: 28px;
}

/* latin glyphs run wide next to the chinese ones */
.en {
    font-size: 18px;
    line-height: 1;
}

.field .en, .version .en {
    font-size: 16px;
}

.content strong .en {
    font-size: 17px;
}

.select-wrap {
    display: grid;
    align-items: center;
    margin-top: 5px;
}

.select-wrap select, .select-wrap .caret {
    grid-area: 1 / 1;
}

.select-wrap select {
    appearance: none;
    height: 50px;
    padding: 0 14px;
    border-radius: 10px;
    background-color: #ffffff;
}

.select-wrap .latin {
    font-size: 18px;
}

.caret {
    width: 18px;
    height: 18px;
}

.select-wrap .caret {
    justify-self: end;
    margin-right: 17px;
    pointer-events: none;
}

.slider {
    font-family: "Liberation Mono", monospace;
    font-size: 17px;
    line-height: 22px;
}

.slider label {
    font-family: "Noto Sans CJK SC", sans-serif;
}

.slider-value {
    height: 22px;
    color: #165dff;
}

.slider-value output {
    display: inline-block;
    transform: translateX(-50%);
}

.slider input {
    appearance: none;
    display: block;
    width: 100%;
    height: 5px;
    margin: 6px 0 16px;
    border-radius: 3px;
    background-image: linear-gradient(90deg, #165dff 35%, #e2e2e2 35%);
}

.slider input::-webkit-slider-thumb {
    appearance: none;
    width: 15px;
    height: 15px;
    border-radius: 50%;
    background-color: #165dff;
}

.slider-ends {
    display: flex;
    justify-content: space-between;
    padding-bottom: 3px;
}

.stepper {
    display: flex;
    height: 48px;
    margin: 6px 1px 0;
    border-radius: 10px;
    background-color: #ffffff;
}

.stepper input {
    flex: 1;
    min-width: 0;
    padding-left: 10px;
    appearance: textfield;
    font-size: 18px;
}

.stepper input::-webkit-inner-spin-button {
    appearance: none;
}

.stepper button {
    display: flex;
    align-items: center;
    justify-content: center;
    width: 40px;
}

.stepper svg {
    width: 10px;
    height: 10px;
}

.actions {
    display: flex;
    gap: 20px;
}

.action {
    flex: 1;
    height: 48px;
    border: 1px solid #cccccc;
    border-radius: 10px;
    background-color: #fcfcfc;
}

.main {
    position: relative;
    flex: 1;
    padding: 67px 7px 86px 0;
}

.chat {
    max-width: 880px;
    margin: 0 auto;
}

.expander {
    margin-left: 70px;
    border: 1px solid #d3d4d8;
    border-radius: 10px;
}

.expander summary {
    display: flex;
    align-items: center;
    gap: 12px;
    height: 58px;
    padding: 0 24px 2px 23px;
    font-size: 18px;
}

.expander .caret {
    margin-left: auto;
}

.message {
    display: flex;
    gap: 10px;
    margin-top: 20px;
    padding: 20px 0 20px 20px;
}

.message.user {
    margin-top: 40px;
    border-radius: 10px;
    background-color: #f7f8fa;
}

.user .content {
    padding: 4px 0;
}

.avatar {
    display: flex;
    flex: none;
    align-items: center;
    justify-content: center;
    width: 40px;
    height: 40px;
    border-radius: 10px;
}

.avatar.red {
    background-color: #ff6c6c;
}

.avatar.blue {
    background-color: #165dff;
    color: #ffffff;
}

.face {
    width: 24px;
    height: 24px;
}

.content {
    flex: 1;
}

.content ol {
    margin: 20px 0;
    padding-left: 24px;
}

.content li {
    padding-left: 12px;
}

.content li::marker {
    font-size: 18px;
}

.content li + li {
    margin-top: 20px;
}

.composer {
    display: flex;
    align-items: center;
    height: 50px;
    margin-top: 3px;
    padding: 0 13px 0 11px;
    border-radius: 10px;
    background-color: #f0f2f6;
}

.composer input {
    flex: 1;
}

.composer input::placeholder {
    color: #838793;
}

.send {
    width: 24px;
    height: 20px;
}

.more {
    position: absolute;
    top: 17px;
    right: 18px;
}

.scroll-thumb {
    position: absolute;
    top: 48%;
    right: 0;
    width: 7px;
    height: 27%;
    border-radius: 4px;
    background-color: #999999;
}

.guard {
    position: absolute;
    right: 12px;
    bottom: 12px;
    display: flex;
    align-items: center;
    justify-content: center;
    width: 50px;
    height: 50px;
    border-radius: 50%;
    background-color: #ffffff;
    box-shadow: 0 0 14px rgba(0, 0, 0, 0.2);
}

.guard svg {
    width: 26px;
    height: 28px;
}
```
